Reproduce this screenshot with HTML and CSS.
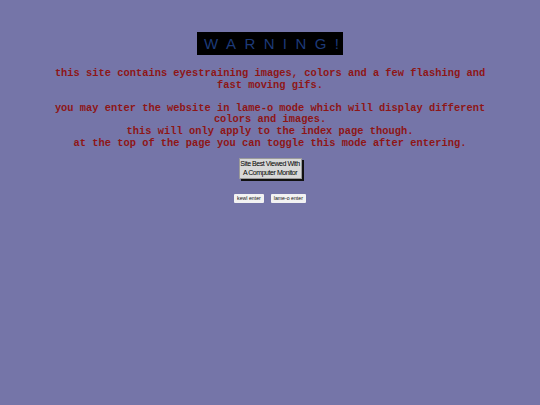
FILE: index.html
```html
<!DOCTYPE html>
<html lang="en">
<head>
	<meta charset="UTF-8">
	<title>warning</title>
	<link rel="stylesheet" href="styles.css">
</head>
<body>
	<div class="page">
		<div class="warning">WARNING!</div>

		<p class="notice">
			this site contains eyestraining images, colors and a few flashing and<br>
			fast moving gifs.<br>
			<br>
			you may enter the website in lame-o mode which will display different<br>
			colors and images.<br>
			this will only apply to the index page though.<br>
			at the top of the page you can toggle this mode after entering.
		</p>

		<div class="badge">Site Best Viewed With<br>A Computer Monitor</div>

		<div class="buttons">
			<button class="enter">kewl enter</button>
			<button class="enter">lame-o enter</button>
		</div>
	</div>
</body>
</html>
```

FILE: styles.css
```css
body {
	margin: 0;
	background: #7575a8;
}

.page {
	display: flex;
	flex-direction: column;
	align-items: center;
	padding-top: 32px;
}

.warning {
	background: #000;
	color: #1d3a78;
	font-family: "Liberation Sans", Arial, sans-serif;
	font-size: 15px;
	letter-spacing: 8.4px;
	padding: 4px 0 4px 7px;
	width: 139px;
	height: 15px;
	line-height: 15px;
}

.notice {
	margin: 13px 0 0;
	color: #8e1616;
	font-family: "Liberation Mono", "Courier New", monospace;
	font-weight: bold;
	font-size: 10.4px;
	line-height: 11.6px;
	text-align: center;
}

.badge {
	margin-top: 9px;
	width: 61px;
	height: 18px;
	padding: 1px 0 0;
	background: #d8d8d8;
	border: 1px solid #9a9a9a;
	box-shadow: 2px 2px 0 #111;
	color: #000;
	font-family: "Liberation Sans", Arial, sans-serif;
	font-size: 7px;
	letter-spacing: -0.45px;
	line-height: 8.5px;
	white-space: nowrap;
	text-align: center;
}

.buttons {
	display: flex;
	gap: 7px;
	margin-top: 15px;
}

.enter {
	margin: 0;
	padding: 0 3px;
	height: 9px;
	border: none;
	border-radius: 1px;
	background: #f2f2f2;
	color: #111;
	font-family: "Liberation Sans", Arial, sans-serif;
	font-size: 5.2px;
	line-height: 9px;
}
```
